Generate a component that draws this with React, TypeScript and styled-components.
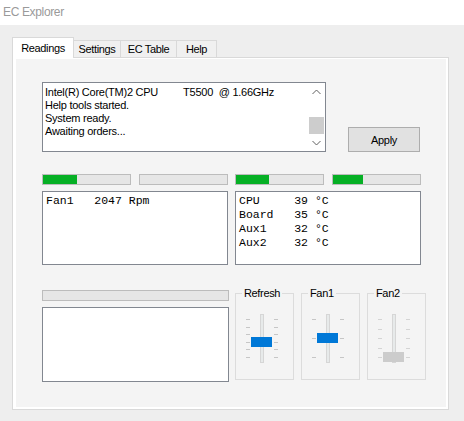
import React from "react";
import styled, { createGlobalStyle } from "styled-components";

const Global = createGlobalStyle`
  html, body { margin: 0; padding: 0; background: #eeeeee; }
  body { font-family: "Liberation Sans", Arial, sans-serif; color: #000; }
`;

const Window = styled.div`
  width: 464px;
  height: 421px;
  display: flex;
  flex-direction: column;
  background: #eeeeee;
  overflow: hidden;
`;

const TitleBar = styled.div`
  flex: none;
  height: 25px;
  box-sizing: border-box;
  padding-left: 3px;
  background: #ffffff;
  color: #9a9a9a;
  font-size: 12px;
  line-height: 25px;
  letter-spacing: -0.35px;
`;

const Client = styled.div`
  flex: 1;
  display: flex;
  flex-direction: column;
  padding: 12px 0 0 12px;
`;

const TabStrip = styled.div`
  display: flex;
  align-items: flex-end;
  height: 21px;
  margin-bottom: -1px;
  position: relative;
  z-index: 1;
`;

const Tab = styled.div<{ $active?: boolean; $w: number }>`
  box-sizing: border-box;
  width: ${(p) => p.$w}px;
  height: ${(p) => (p.$active ? 21 : 17)}px;
  margin-bottom: ${(p) => (p.$active ? 0 : 1)}px;
  border: 1px solid #d9d9d9;
  border-bottom: none;
  background: ${(p) => (p.$active ? "#ffffff" : "#f0f0f0")};
  font-size: 11px;
  letter-spacing: -0.35px;
  display: flex;
  align-items: center;
  justify-content: center;
  position: relative;
  z-index: ${(p) => (p.$active ? 2 : 1)};
  & + & {
    margin-left: -1px;
  }
`;

const TabBody = styled.div`
  box-sizing: border-box;
  width: 437px;
  height: 353px;
  border: 1px solid #d9d9d9;
  background: #ffffff;
  padding: 1px 2px 2px 3px;
  display: flex;
`;

const Page = styled.div`
  flex: 1;
  box-sizing: border-box;
  background: #f4f4f4;
  padding: 23px 0 0 26px;
  display: flex;
  flex-direction: column;
`;

const TopRow = styled.div`
  display: flex;
  align-items: flex-start;
`;

const LogBox = styled.div`
  box-sizing: border-box;
  width: 284px;
  height: 70px;
  border: 1px solid #828790;
  background: #ffffff;
  display: flex;
`;

const LogText = styled.div`
  flex: 1;
  overflow: hidden;
  padding: 3px 0 0 2px;
  font-size: 11px;
  line-height: 13px;
  letter-spacing: -0.25px;
  white-space: pre;
`;

const ScrollBar = styled.div`
  width: 17px;
  display: flex;
  flex-direction: column;
  background: #ffffff;
`;

const ScrollButton = styled.div`
  height: 17px;
  display: flex;
  align-items: center;
  justify-content: center;
`;

const ScrollTrack = styled.div`
  flex: 1;
  display: flex;
  flex-direction: column;
  justify-content: flex-end;
  padding: 0 1px;
`;

const ScrollThumb = styled.div`
  height: 17px;
  background: #cdcdcd;
`;

const ApplyButton = styled.button`
  box-sizing: border-box;
  width: 72px;
  height: 25px;
  margin: 45px 0 0 22px;
  padding: 0;
  border: 1px solid #adadad;
  background: #e1e1e1;
  font-family: "Liberation Sans", Arial, sans-serif;
  font-size: 11px;
  letter-spacing: -0.35px;
  color: #000;
`;

const TwoCols = styled.div<{ $mt: number }>`
  display: grid;
  grid-template-columns: 186px 186px;
  column-gap: 7px;
  margin-top: ${(p) => p.$mt}px;
`;

const BarPair = styled.div`
  display: flex;
  justify-content: space-between;
`;

const Bar = styled.div<{ $w?: number }>`
  box-sizing: border-box;
  width: ${(p) => (p.$w ? `${p.$w}px` : "100%")};
  height: 11px;
  border: 1px solid #bcbcbc;
  background: #e6e6e6;
  display: flex;
`;

const BarFill = styled.div`
  height: 100%;
  background: #06b025;
`;

const Readout = styled.div<{ $h: number }>`
  box-sizing: border-box;
  height: ${(p) => p.$h}px;
  border: 1px solid #828790;
  background: #ffffff;
  padding: 2px 0 0 3px;
  font-family: "Liberation Mono", "Courier New", monospace;
  font-size: 11.5px;
  line-height: 14px;
  white-space: pre;
`;

const BottomRow = styled.div`
  display: flex;
  align-items: flex-start;
  margin-top: 21px;
`;

const LeftStack = styled.div`
  width: 187px;
  padding-top: 4px;
  display: flex;
  flex-direction: column;
  gap: 6px;
`;

const Groups = styled.div`
  display: flex;
  gap: 7px;
  margin-left: 6px;
`;

const Group = styled.fieldset`
  box-sizing: border-box;
  width: 59px;
  height: 94px;
  margin: 0;
  padding: 0;
  min-width: 0;
  border: 1px solid #dcdcdc;
`;

const Legend = styled.legend`
  margin-left: 6px;
  padding: 0 2px;
  font-size: 11px;
  line-height: 14px;
  letter-spacing: -0.35px;
`;

const Chevron = ({ up }: { up?: boolean }) => (
  <svg width="9" height="6" viewBox="0 0 9 6">
    <polyline
      points={up ? "0.5,5 4.5,1 8.5,5" : "0.5,1 4.5,5 8.5,1"}
      fill="none"
      stroke="#606060"
      strokeWidth="1"
    />
  </svg>
);

const Trackbar = ({ ticks, value, disabled }: { ticks: number; value: number; disabled?: boolean }) => {
  const ys = Array.from({ length: ticks }, (_, i) => 19 + (i * 38) / (ticks - 1));
  const ty = ys[value];
  const tick = disabled ? "#d4d4d4" : "#c6c6c6";
  return (
    <svg width="57" height="75" viewBox="0 0 57 75" style={{ display: "block" }}>
      <rect x="24.5" y="14.5" width="3" height="48" fill="#e7eaea" stroke="#d6d6d6" />
      {ys.map((y, i) => {
        const yy = Math.round(y) + 0.5;
        return (
          <g key={i}>
            <line x1="10" y1={yy} x2="14" y2={yy} stroke={tick} />
            <line x1="38" y1={yy} x2="42" y2={yy} stroke={tick} />
          </g>
        );
      })}
      <rect x="15" y={Math.round(ty) - 5} width="21" height="10" fill={disabled ? "#cccccc" : "#0078d7"} />
    </svg>
  );
};

const logLines = [
  "Intel(R) Core(TM)2 CPU         T5500  @ 1.66GHz",
  "Help tools started.",
  "System ready.",
  "Awaiting orders...",
];

const temps = ["CPU     39 °C", "Board   35 °C", "Aux1    32 °C", "Aux2    32 °C"];

const tabs = [
  { label: "Readings", w: 62, active: true },
  { label: "Settings", w: 48 },
  { label: "EC Table", w: 57 },
  { label: "Help", w: 41 },
];

export default function App() {
  return (
    <>
      <Global />
      <Window>
        <TitleBar>EC Explorer</TitleBar>
        <Client>
          <TabStrip>
            {tabs.map((t) => (
              <Tab key={t.label} $w={t.w} $active={t.active}>
                {t.label}
              </Tab>
            ))}
          </TabStrip>
          <TabBody>
            <Page>
              <TopRow>
                <LogBox>
                  <LogText>{logLines.join("\n")}</LogText>
                  <ScrollBar>
                    <ScrollButton>
                      <Chevron up />
                    </ScrollButton>
                    <ScrollTrack>
                      <ScrollThumb />
                    </ScrollTrack>
                    <ScrollButton>
                      <Chevron />
                    </ScrollButton>
                  </ScrollBar>
                </LogBox>
                <ApplyButton>Apply</ApplyButton>
              </TopRow>

              <TwoCols $mt={22}>
                <BarPair>
                  <Bar $w={89}>
                    <BarFill style={{ width: "39%" }} />
                  </Bar>
                  <Bar $w={89} />
                </BarPair>
                <BarPair>
                  <Bar $w={89}>
                    <BarFill style={{ width: "38%" }} />
                  </Bar>
                  <Bar $w={89}>
                    <BarFill style={{ width: "35%" }} />
                  </Bar>
                </BarPair>
              </TwoCols>

              <TwoCols $mt={6}>
                <Readout $h={74}>{"Fan1   2047 Rpm"}</Readout>
                <Readout $h={74}>{temps.join("\n")}</Readout>
              </TwoCols>

              <BottomRow>
                <LeftStack>
                  <Bar />
                  <Readout $h={75} />
                </LeftStack>
                <Groups>
                  <Group>
                    <Legend>Refresh</Legend>
                    <Trackbar ticks={6} value={3} />
                  </Group>
                  <Group>
                    <Legend>Fan1</Legend>
                    <Trackbar ticks={3} value={1} />
                  </Group>
                  <Group>
                    <Legend>Fan2</Legend>
                    <Trackbar ticks={5} value={4} disabled />
                  </Group>
                </Groups>
              </BottomRow>
            </Page>
          </TabBody>
        </Client>
      </Window>
    </>
  );
}
